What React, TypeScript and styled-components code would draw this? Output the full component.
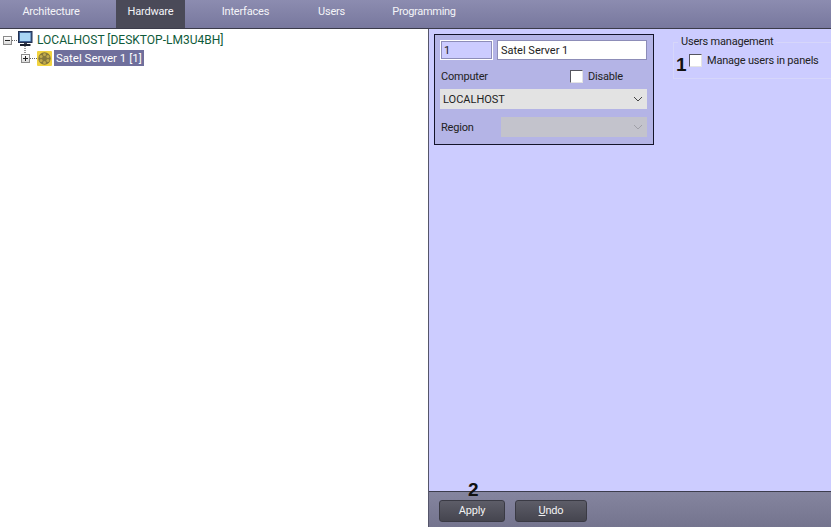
import React from 'react';
import styled, { createGlobalStyle } from 'styled-components';

const GlobalStyle = createGlobalStyle`
  * {
    box-sizing: border-box;
  }

  html, body {
    margin: 0;
    padding: 0;
    overflow: hidden;
  }

  body {
    font-family: Roboto, 'Liberation Sans', sans-serif;
    font-size: 11px;
    letter-spacing: -0.2px;
    color: #222222;
  }
`;

const Window = styled.div`
  width: 831px;
  height: 527px;
  display: flex;
  flex-direction: column;
  overflow: hidden;
`;

const TabBar = styled.nav`
  height: 29px;
  flex: none;
  display: flex;
  gap: 25px;
  padding-left: 11px;
  background: linear-gradient(#8c8cb0, #78789e);
  border-bottom: 1px solid #3b3b4a;
`;

const Tab = styled.div<{ $active?: boolean; $width: number; $tight?: boolean }>`
  width: ${props => props.$width}px;
  padding-top: 5px;
  text-align: center;
  white-space: nowrap;
  letter-spacing: ${props => (props.$tight ? '-0.3px' : 'inherit')};
  color: #f4f4f8;
  background: ${props => (props.$active ? '#4a4a58' : 'transparent')};
`;

const Body = styled.div`
  flex: 1;
  display: flex;
  min-height: 0;
`;

const TreePane = styled.section`
  width: 428px;
  flex: none;
  padding: 2px 0 0 3px;
  background: #ffffff;
`;

const TreeRow = styled.div<{ $indent?: number }>`
  height: 18px;
  display: flex;
  align-items: center;
  margin-left: ${props => props.$indent || 0}px;
`;

const Expander = styled.span`
  width: 9px;
  height: 9px;
  flex: none;
  position: relative;
  border: 1px solid #8a8a8a;
  background: linear-gradient(#ffffff, #dcdcdc);
`;

const ExpanderBar = styled.span<{ $vertical?: boolean }>`
  position: absolute;
  left: ${props => (props.$vertical ? '3px' : '1px')};
  top: ${props => (props.$vertical ? '1px' : '3px')};
  width: ${props => (props.$vertical ? '1px' : '5px')};
  height: ${props => (props.$vertical ? '5px' : '1px')};
  background: #222222;
`;

const Dots = styled.span<{ $width: number }>`
  width: ${props => props.$width}px;
  flex: none;
  border-top: 1px dotted #666666;
`;

const HostLabel = styled.span`
  margin-left: 3px;
  font-size: 12px;
  letter-spacing: 0;
  color: #0f5b3a;
  white-space: nowrap;
`;

const ServerLabel = styled.span`
  margin-left: 2px;
  padding: 0 2px;
  height: 16px;
  line-height: 16px;
  font-size: 11.5px;
  letter-spacing: 0;
  color: #ffffff;
  background: #6f6f9c;
  white-space: nowrap;
`;

const SidePane = styled.section`
  flex: 1;
  display: flex;
  flex-direction: column;
  background: #ccccff;
  border-left: 1px solid #55556a;
`;

const Settings = styled.div`
  flex: 1;
  display: flex;
  align-items: flex-start;
  gap: 19px;
  padding: 5px 0 0 5px;
`;

const ServerCard = styled.div`
  width: 220px;
  height: 111px;
  padding: 5px 6px 0 5px;
  display: flex;
  flex-direction: column;
  background: #b4b4e6;
  border: 1px solid #14142a;
`;

const CardRow = styled.div<{ $top?: number }>`
  display: flex;
  align-items: center;
  margin-top: ${props => props.$top || 0}px;
`;

const IdInput = styled.div`
  width: 53px;
  height: 20px;
  padding: 3px 3px;
  background: #ccccff;
  border: 1px solid #ffffff;
  outline: 1px solid #8d8db8;
  outline-offset: -2px;
`;

const NameInput = styled.div`
  width: 150px;
  height: 20px;
  margin-left: 4px;
  padding: 3px 3px;
  letter-spacing: 0;
  background: #ffffff;
  border: 1px solid #8d8db8;
`;

const FieldLabel = styled.span<{ $width: number }>`
  width: ${props => props.$width}px;
  flex: none;
  padding-left: 1px;
`;

const CheckBox = styled.span`
  width: 13px;
  height: 13px;
  flex: none;
  background: #ffffff;
  border: 1px solid #55555f;
  border-right-color: #e4e4e4;
  border-bottom-color: #e4e4e4;
`;

const CheckLabel = styled.span`
  margin-left: 5px;
  white-space: nowrap;
`;

const Select = styled.div<{ $disabled?: boolean }>`
  height: 20px;
  display: flex;
  align-items: center;
  justify-content: space-between;
  padding: 0 4px 0 3px;
  letter-spacing: 0;
  background: ${props => (props.$disabled ? '#c3c3cc' : '#e3e3e3')};
  color: ${props => (props.$disabled ? '#9a9aa0' : '#222222')};
  flex: 1;
`;

const UsersGroup = styled.fieldset`
  width: 158px;
  height: 45px;
  margin: 0;
  padding: 0;
  border: 1px solid #d6d6fa;
  border-right: none;
  position: relative;
  min-inline-size: 0;
`;

const GroupTitle = styled.legend`
  margin-left: 4px;
  padding: 0 3px;
  line-height: 16px;
`;

const GroupRow = styled.div`
  display: flex;
  align-items: center;
  margin-top: 4px;
  padding-left: 15px;
`;

const Annotation = styled.span`
  position: absolute;
  font-family: 'Liberation Sans', Arial, sans-serif;
  font-size: 19px;
  font-weight: 700;
  line-height: 19px;
  letter-spacing: 0;
  color: #111111;
`;

const UsersMark = styled(Annotation)`
  left: 2px;
  top: 5px;
`;

const ApplyMark = styled(Annotation)`
  left: 39px;
  top: -12px;
`;

const Footer = styled.footer`
  height: 36px;
  flex: none;
  position: relative;
  display: flex;
  gap: 10px;
  padding: 8px 0 0 10px;
  background: linear-gradient(#85859f, #74748e);
  border-top: 1px solid #3c3c4c;
`;

const FooterButton = styled.button<{ $width: number }>`
  width: ${props => props.$width}px;
  height: 22px;
  padding: 0 0 2px;
  font: inherit;
  letter-spacing: inherit;
  color: #f2f2f2;
  background: linear-gradient(#5d5d68, #45454f);
  border: 1px solid #3a3a44;
  border-radius: 3px;
`;

const Monitor = () => (
  <svg width="17" height="18" viewBox="0 0 17 18" overflow="visible">
    <rect x="1.5" y="0.5" width="13.5" height="11" fill="#3c5f92" stroke="#22304f" />
    <rect x="3" y="2" width="10.5" height="8" fill="#a9d6f4" />
    <rect x="7" y="12" width="3" height="1" fill="#3a4252" />
    <rect x="3" y="13" width="10.5" height="2" fill="#1c2230" />
    <path d="M8 15 V22" stroke="#333333" strokeDasharray="1 1" />
  </svg>
);

const ServerIcon = () => (
  <svg width="15" height="15" viewBox="0 0 15 15">
    <rect width="15" height="15" rx="1" fill="#f2d33f" />
    <circle cx="7.5" cy="7.5" r="6.2" fill="#86783c" />
    <circle cx="7.5" cy="3.6" r="1.5" fill="#c2ab4c" />
    <circle cx="7.5" cy="11.4" r="1.5" fill="#c2ab4c" />
    <circle cx="4.1" cy="5.5" r="1.5" fill="#c2ab4c" />
    <circle cx="10.9" cy="5.5" r="1.5" fill="#c2ab4c" />
    <circle cx="4.1" cy="9.5" r="1.5" fill="#c2ab4c" />
    <circle cx="10.9" cy="9.5" r="1.5" fill="#c2ab4c" />
  </svg>
);

const Chevron = ({ color }: { color: string }) => (
  <svg width="10" height="6" viewBox="0 0 10 6">
    <path d="M1 1 L5 5 L9 1" fill="none" stroke={color} strokeWidth="1" />
  </svg>
);

const tabs = [
  { label: 'Architecture', width: 80 },
  { label: 'Hardware', width: 69, active: true },
  { label: 'Interfaces', width: 71 },
  { label: 'Users', width: 51 },
  { label: 'Programming', width: 84, tight: true },
];

const App: React.FC = () => (
  <Window>
    <GlobalStyle />
    <TabBar>
      {tabs.map(tab => (
        <Tab key={tab.label} $active={tab.active} $width={tab.width} $tight={tab.tight}>
          {tab.label}
        </Tab>
      ))}
    </TabBar>
    <Body>
      <TreePane>
        <TreeRow>
          <Expander>
            <ExpanderBar />
          </Expander>
          <Dots $width={5} />
          <Monitor />
          <HostLabel>LOCALHOST [DESKTOP-LM3U4BH]</HostLabel>
        </TreeRow>
        <TreeRow $indent={18}>
          <Expander>
            <ExpanderBar />
            <ExpanderBar $vertical />
          </Expander>
          <Dots $width={7} />
          <ServerIcon />
          <ServerLabel>Satel Server 1 [1]</ServerLabel>
        </TreeRow>
      </TreePane>
      <SidePane>
        <Settings>
          <ServerCard>
            <CardRow>
              <IdInput>1</IdInput>
              <NameInput>Satel Server 1</NameInput>
            </CardRow>
            <CardRow $top={10}>
              <FieldLabel $width={130}>Computer</FieldLabel>
              <CheckBox />
              <CheckLabel>Disable</CheckLabel>
            </CardRow>
            <CardRow $top={6}>
              <Select>
                LOCALHOST
                <Chevron color="#444444" />
              </Select>
            </CardRow>
            <CardRow $top={8}>
              <FieldLabel $width={61}>Region</FieldLabel>
              <Select $disabled>
                <span />
                <Chevron color="#a0a0a8" />
              </Select>
            </CardRow>
          </ServerCard>
          <UsersGroup>
            <GroupTitle>Users management</GroupTitle>
            <UsersMark>1</UsersMark>
            <GroupRow>
              <CheckBox />
              <CheckLabel>Manage users in panels</CheckLabel>
            </GroupRow>
          </UsersGroup>
        </Settings>
        <Footer>
          <ApplyMark>2</ApplyMark>
          <FooterButton $width={66}>Apply</FooterButton>
          <FooterButton $width={72}>
            <u>U</u>ndo
          </FooterButton>
        </Footer>
      </SidePane>
    </Body>
  </Window>
);

export default App;
